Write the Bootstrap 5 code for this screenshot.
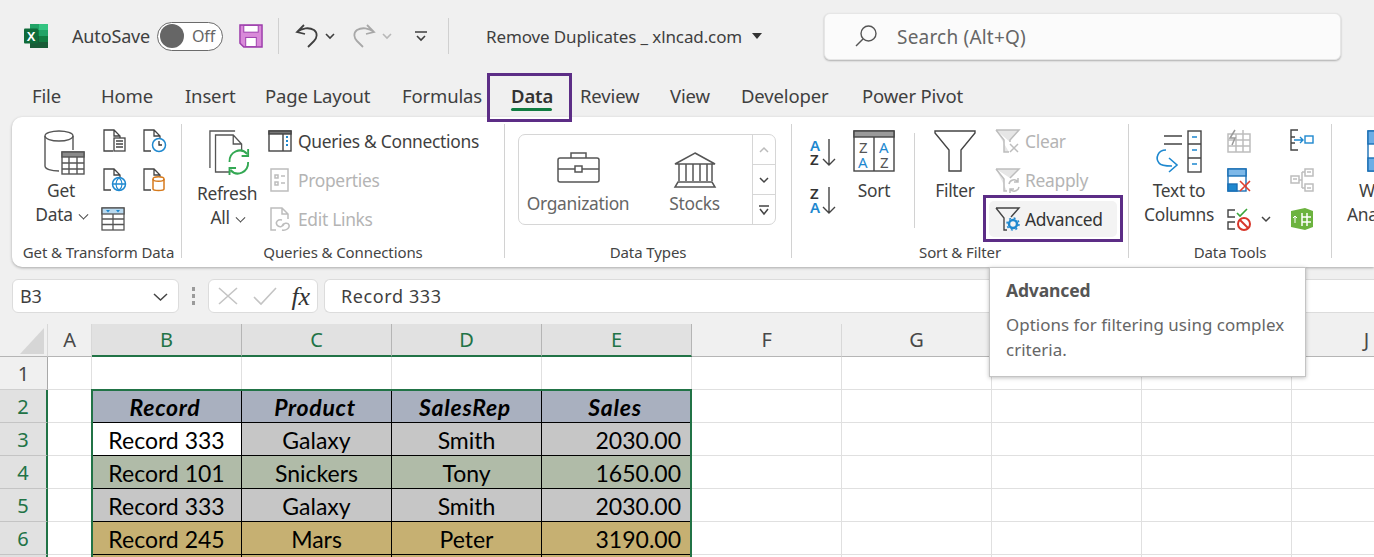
<!DOCTYPE html>
<html lang="en"><head><meta charset="utf-8"><title>Remove Duplicates</title>
<link href="https://cdn.jsdelivr.net/npm/bootstrap@5.3.0/dist/css/bootstrap.min.css" rel="stylesheet">
<style>
html,body{height:557px;overflow:hidden}
body{background:#f0f0f0;font-family:"Noto Sans",sans-serif;color:#3f3f3f;font-size:18px;letter-spacing:-.15px;position:relative;width:1374px}
svg{display:block;flex:none;overflow:visible}
.tbar{height:72px;padding-left:24px}
.asv{margin-left:24px;width:76px;white-space:nowrap}
.tgl{width:66px;height:29px;border:1px solid #6b6b6b;border-radius:15px;background:#fff;margin-left:9px;padding-left:2px;font-size:16px;color:#666;gap:8px}
.tgl span{width:24px;height:24px;border-radius:50%;background:#666}
.vsep{width:1px;height:36px;background:#d0d0d0}
.ttl{margin-left:37px;width:255px;white-space:nowrap;font-size:17px;letter-spacing:-.12px;padding-top:2px}
.srch{margin-left:62px;width:517px;height:47px;background:#fbfbfb;border-radius:6px;box-shadow:0 1px 2px rgba(0,0,0,.28);border:1px solid #e6e6e6;padding-left:30px;color:#666;gap:20px;font-size:19px;letter-spacing:.2px}
.srch span{padding-top:2px}
.m-save{margin-left:16px}.m-sep1{margin-left:15px}.m-undo{margin-left:16px}.m-6{margin-left:6px}.m-redo{margin-left:17px}.m-cust{margin-left:23px}.m-sep2{margin-left:21px}.m-caret{margin-left:11px}
.tabs{height:45px;padding-left:32px;padding-top:3px;white-space:nowrap;font-size:18.5px}
.t69{width:69px}.t84{width:84px}.t80{width:80px}.t137{width:137px}.t88{width:88px}.t90{width:90px}.t71{width:71px}.t121{width:121px}
.tabon{position:relative;z-index:3;height:43px;width:79px;margin-right:11px;padding:0 0 3px 21px;outline:3px solid #5c2d86;font-weight:600;color:#333;top:1px}
.tabon::after{content:"";position:absolute;left:21px;right:17px;bottom:8px;height:3px;border-radius:2px;background:#107c41}
.ribbon{height:150px;margin-left:12px;background:#fff;border-radius:10px 0 0 10px;box-shadow:0 1px 3px rgba(0,0,0,.3);padding:7px 0 9px;position:relative;font-size:17.4px;letter-spacing:-.3px}
.grp{height:134px;flex:none;border-right:1px solid #d2d2d2;display:flex;flex-direction:column;position:relative}
.grpb{flex:1;min-height:0;display:flex}
.grpl{font-size:15px;line-height:20px;text-align:center;letter-spacing:-.1px;white-space:nowrap;height:16px;color:#444}
.pl4{padding-left:4px}
.g1{width:170px}.g2{width:323px}.g3{width:287px}.g4{width:337px}.g5{width:203px}.g6{width:120px;border:0}
.bigb{text-align:center;padding-top:6px;line-height:24px;flex:none;white-space:nowrap}
.bigb svg{margin:0 auto 6px}
.bigb .i-get{margin:0 0 3px 12px}.bigb .i-ref{margin:0 0 6px 16px}.bigb .i-ttc{margin:0 0 6px 14px}.bigb .i-wi{margin:0 0 6px 20px}
.b-get{width:58px;margin-left:20px}.b-ref{width:68px;margin-left:11px}.b-sort{width:42px;margin-left:17px}.b-fil{width:42px;margin-left:19px}.b-ttc{width:74px;margin-left:13px}.b-wi{width:60px;margin-left:15px;text-align:left}
.wtxt{margin-left:12px}
.chev{display:inline-block;width:7px;height:7px;border:solid #444;border-width:0 1.6px 1.6px 0;transform:rotate(45deg) translate(-2px,-2px);margin-left:7px}
.rowi{height:36px;flex:none;display:flex;align-items:center;gap:6px;white-space:nowrap}
.gp5{gap:5px}
.lst{display:flex;flex-direction:column;gap:3px;margin-top:-1px}
.l-q{margin-left:7px}.l-f{margin-left:19px}
.off{color:#b4b4b4}
.mini{display:grid;gap:15px 16px;padding-top:5px;align-content:start}
.mn1{grid-template-columns:24px 24px;margin-left:13px}
.mn5{grid-template-columns:24px 22px 24px;margin-left:11px;column-gap:0}
.i-tb{margin-left:-2px}.i-r{margin-left:17px}
.gal{width:258px;height:91px;border:1px solid #d6d6d6;border-radius:7px;margin:10px 0 0 13px;color:#666;display:flex}
.galc{flex:1;display:flex}
.galc>div{padding-top:17px;text-align:center;width:115px;line-height:24px}
.galc>.gw{width:118px}
.galc svg{margin:0 auto 8px}
.galc .i-st{margin-bottom:3px}
.gals{width:23px;border-left:1px solid #d6d6d6;display:flex;flex-direction:column}
.gals>div{flex:1;border-bottom:1px solid #d6d6d6;display:flex;align-items:center;justify-content:center}
.gals>div:last-child{border:0}
.azc{margin:14px 0 0 18px;gap:18px;width:26px}
.sep2{width:1px;height:95px;background:#d2d2d2;margin:9px 0 0 19px}
.adv{background:#f3f3f3;border-radius:5px;padding-left:6px;margin-left:-6px;width:128px;color:#333;position:relative}
.adv::before{content:"";position:absolute;left:-6px;right:-6px;top:-6px;bottom:-5px;border:3px solid #5c2d86}
.fbar{margin-top:12px;height:34px;padding-left:12px}
.fbox{background:#fff;border:1px solid #dcdcdc;border-radius:6px;height:34px}
.nbox{width:167px;padding:1px 10px 0 7px}
.dots{width:29px;gap:3px}
.dots i{width:3px;height:4px;background:#9a9a9a}
.fx{width:110px;padding:0 7px 0 9px;font-family:"Liberation Serif",serif;font-style:italic;font-size:26px;color:#333}
.fin{flex:1;margin-left:6px;border-radius:6px 0 0 6px;border-right:0;padding-left:16px;letter-spacing:.6px;padding-top:1px}
.sheet{margin-top:11px;display:grid;grid-template-columns:48px 44px repeat(9,150px);grid-auto-rows:33px;position:relative;background:#fff}
.sheet>div{display:flex;align-items:center;justify-content:center;border-right:1px solid #e0e0e0;border-bottom:1px solid #e0e0e0}
.sheet>.hc{background:#f0f0f0;font-size:20px;color:#484848;border-right-color:#d8d8d8;border-bottom-color:#b5b5b5}
.sheet>.hs{background:#e1e1e1;color:#217346;border-right-color:#b5b5b5;border-bottom:2px solid #217346}
.sheet>.rh{background:#f0f0f0;font-size:20px;color:#484848;border-right-color:#a8a8a8;border-bottom-color:#cfcfcf;padding-top:2px}
.sheet>.rs{background:#e1e1e1;color:#217346;border-right:2px solid #217346;border-bottom-color:#c4c4c4}
.sheet>.xl{font-family:Lato,"Liberation Sans",sans-serif;font-size:23px;letter-spacing:0;color:#000;border-right:1.5px solid #000;border-bottom:1.5px solid #000;padding-top:2px}
.sheet>.hd{background:#a9b0bf;font-weight:700;font-style:italic;letter-spacing:.7px;padding-right:3px}
.sheet>.sv{background:#c6c6c6}.sheet>.gn{background:#b0bba8}.sheet>.tn{background:#c6b072}
.sheet>.num{justify-content:flex-end;padding-right:10px}
.sheet>.wh{background:#fff}
.sheet>.sel{position:absolute;grid-area:3/3/10/7;inset:-1px 0 0 -1px;background:transparent;border:2px solid #217346;pointer-events:none;z-index:2}
.tipb{position:absolute;left:989px;top:267px;width:317px;height:110px;background:#fff;border:1px solid #c4c4c4;box-shadow:0 1px 4px rgba(0,0,0,.25);padding:10px 16px;z-index:5;color:#666;font-size:16.9px;line-height:25px;letter-spacing:.05px}
.tipb h6{font-size:17.5px;font-weight:700;color:#555;line-height:24px;margin:0 0 10px;letter-spacing:-.15px}
</style></head><body>

<div class="tbar d-flex align-items-center">
<svg width="24" height="24" viewBox="0 0 24 24"><rect x="6" y="0" width="9" height="6" fill="#21a366"/><rect x="15" y="0" width="9" height="6" fill="#33c481"/><rect x="6" y="6" width="9" height="6" fill="#107c41"/><rect x="15" y="6" width="9" height="6" fill="#21a366"/><rect x="6" y="12" width="9" height="6" fill="#185c37"/><rect x="15" y="12" width="9" height="6" fill="#107c41"/><rect x="6" y="18" width="18" height="6" fill="#185c37"/><rect x="0" y="4.500" width="14" height="15" rx="1" fill="#0f6b3a"/><text x="7" y="16.500" text-anchor="middle" font-family="Liberation Sans" font-weight="700" font-size="13" fill="#fff">X</text></svg>
<span class="asv">AutoSave</span>
<div class="tgl d-flex align-items-center"><span></span>Off</div>
<svg class="m-save" width="24" height="24" viewBox="0 0 25 25"><path d="M1 1H24V24H5L1 20Z" fill="#d98ad9" stroke="#9c3cab" stroke-width="1.500"/><rect x="5" y="1.500" width="15" height="7" fill="#fff" stroke="#9c3cab"/><rect x="7" y="14" width="11" height="9.500" fill="#fff" stroke="#9c3cab"/></svg>
<div class="vsep m-sep1"></div>
<svg class="m-undo" width="24" height="24" viewBox="0 0 24 24" fill="none" stroke="#3f3f3f" stroke-width="1.800"><path d="M9 1 2 8 10 10M2 8C7 4 14 3 19 6c4 3 3 8 0 11l-6 6"/></svg>
<svg class="m-6" width="10" height="6" viewBox="0 0 10 6" fill="none" stroke="#3f3f3f" stroke-width="1.600"><path d="M1 1l4 4 4-4"/></svg>
<svg class="m-redo" width="24" height="24" viewBox="0 0 24 24" fill="none" stroke="#a8a8a8" stroke-width="1.800"><path d="M15 1l7 7-8 2M22 8C17 4 10 3 5 6c-4 3-3 8 0 11l6 6"/></svg>
<svg class="m-6" width="10" height="6" viewBox="0 0 10 6" fill="none" stroke="#b8b8b8" stroke-width="1.600"><path d="M1 1l4 4 4-4"/></svg>
<svg class="m-cust" width="12" height="10" viewBox="0 0 12 10" fill="none" stroke="#3f3f3f" stroke-width="1.600"><path d="M0 1h12M2 5l4 4 4-4"/></svg>
<div class="vsep m-sep2"></div>
<span class="ttl">Remove Duplicates _ xlncad.com</span>
<svg class="m-caret" width="10" height="6" viewBox="0 0 10 6"><path d="M0 0h10L5 6z" fill="#333"/></svg>
<div class="srch d-flex align-items-center"><svg width="22" height="22" viewBox="0 0 22 22" fill="none" stroke="#555" stroke-width="1.400"><circle cx="13.500" cy="8.500" r="7.500"/><path d="M8 14 1 21"/></svg><span>Search (Alt+Q)</span></div>
</div>

<div class="tabs d-flex align-items-center">
<span class="t69">File</span><span class="t84">Home</span><span class="t80">Insert</span><span class="t137">Page Layout</span><span class="t88">Formulas</span>
<div class="tabon d-flex align-items-center">Data</div>
<span class="t90">Review</span><span class="t71">View</span><span class="t121">Developer</span><span>Power Pivot</span>
</div>

<div class="ribbon d-flex">
<!-- Get & Transform -->
<div class="grp g1"><div class="grpb">
<div class="bigb b-get"><svg class="i-get" width="42" height="45" viewBox="0 0 42 45" fill="none" stroke="#555" stroke-width="1.400"><path d="M1 6V36c0 3 6 5 14 5M29 6V20"/><ellipse cx="15" cy="6" rx="14" ry="5"/><rect x="18" y="22" width="22" height="22" fill="#fff"/><rect x="18" y="22" width="22" height="5" fill="#8a8a8a"/><path d="M25 27V44M33 27V44M18 33H40M18 39H40"/></svg>Get<br>Data<i class="chev"></i></div>
<div class="mini mn1">
<svg width="24" height="24" viewBox="0 0 24 24" fill="none" stroke="#444" stroke-width="1.300"><path d="M10 22H1V1H11L17 7V9M11 1V7H17"/><rect x="11" y="9" width="11" height="13" fill="#fff"/><path d="M13 12h7M13 15h7M13 18h7"/></svg>
<svg width="24" height="24" viewBox="0 0 24 24" fill="none" stroke="#444" stroke-width="1.300"><path d="M8 22H1V1H11L17 7V9M11 1V7H17"/><circle cx="16" cy="16" r="6.500" fill="#fff" stroke="#1e88cf" stroke-width="1.500"/><path d="M16 12v4h3" stroke="#333"/></svg>
<svg width="24" height="24" viewBox="0 0 24 24" fill="none" stroke="#444" stroke-width="1.300"><path d="M8 22H1V1H11L17 7V9M11 1V7H17"/><circle cx="16" cy="16" r="6.500" fill="#fff" stroke="#1e88cf" stroke-width="1.500"/><path d="M9.500 16h13M16 9.500c-4 4-4 9 0 13M16 9.500c4 4 4 9 0 13" stroke="#1e88cf"/></svg>
<svg width="24" height="24" viewBox="0 0 24 24" fill="none" stroke="#444" stroke-width="1.300"><path d="M8 22H1V1H11L17 7V9M11 1V7H17"/><path d="M10 11c0-3 11-3 11 0V21c0 2-11 2-11 0Z" fill="#fff" stroke="#d67a1c" stroke-width="1.500"/><path d="M10 11c0 3 11 3 11 0" stroke="#d67a1c" stroke-width="1.500"/></svg>
<svg class="i-tb" width="24" height="24" viewBox="0 0 24 24" fill="none" stroke="#555" stroke-width="1.300"><rect x="1" y="1" width="22" height="22"/><rect x="1" y="1" width="22" height="6" fill="#b9d9ef"/><path d="M5 3h4L7 5.500zM15 3h4l-2 2.500z" fill="#1e88cf" stroke="none"/><path d="M1 12H23M1 17.500H23M12 7V23"/></svg>
</div></div>
<div class="grpl pl4">Get &amp; Transform Data</div></div>

<!-- Queries -->
<div class="grp g2"><div class="grpb">
<div class="bigb b-ref"><svg class="i-ref" width="41" height="45" viewBox="0 0 44 45" preserveAspectRatio="none" fill="none" stroke="#555" stroke-width="1.400"><path d="M5 1H1V38M5 1H28"/><path d="M23 42H7V5H26L35 14V20M26 5V14H35"/><path d="M22 32a11 11 0 0 1 19-8M42 32a11 11 0 0 1-19 8" stroke="#33a853" stroke-width="2"/><path d="M42 19v7h-7M22 45v-7h7" stroke="#33a853" stroke-width="2"/></svg>Refresh<br>All<i class="chev"></i></div>
<div class="lst l-q">
<div class="rowi"><svg width="24" height="22" viewBox="0 0 24 22" fill="none" stroke="#444" stroke-width="1.400"><rect x="1" y="1" width="22" height="20"/><rect x="1" y="1" width="22" height="3" fill="#777"/><path d="M15 4V21"/><path d="M18 7h2M18 11h2M18 15h2" stroke="#1e88cf" stroke-width="2"/></svg>Queries &amp; Connections</div>
<div class="rowi off"><svg width="24" height="24" viewBox="0 0 24 24" fill="none" stroke="#bdbdbd" stroke-width="1.500"><rect x="3" y="1" width="17" height="22"/><path d="M7 7h3v3H7zM7 14h3v3H7zM13 8h4M13 15h4"/></svg>Properties</div>
<div class="rowi off"><svg width="24" height="24" viewBox="0 0 24 24" fill="none" stroke="#bdbdbd" stroke-width="1.500"><path d="M8 23H3V1H14L20 7V12M14 1V7H20"/><path d="M14 13c-4-1-7 2-5 5s6 2 7-1M14 23c4 1 8-2 7-5s-6-2-7 1"/></svg>Edit Links</div>
</div></div>
<div class="grpl">Queries &amp; Connections</div></div>

<!-- Data Types -->
<div class="grp g3"><div class="grpb">
<div class="gal"><div class="galc">
<div class="gw"><svg width="43" height="31" viewBox="0 0 43 31" fill="none" stroke="#555" stroke-width="1.500"><path d="M14 6V1H29V6"/><rect x="1" y="6" width="41" height="24" rx="2"/><path d="M1 17H18M25 17H42"/><rect x="18" y="14" width="7" height="6"/></svg>Organization</div>
<div><svg class="i-st" width="42" height="36" viewBox="0 0 42 36" fill="none" stroke="#555" stroke-width="1.500"><path d="M21 1 41 12H1Z"/><path d="M5 12V29M12 12V29M19 12V29M26 12V29M33 12V29M38 12V29M4 30H38M1 35H41L38 30H4Z"/></svg>Stocks</div>
</div><div class="gals">
<div><svg width="10" height="6" viewBox="0 0 10 6" fill="none" stroke="#bbb" stroke-width="1.500"><path d="M1 5l4-4 4 4"/></svg></div>
<div><svg width="10" height="6" viewBox="0 0 10 6" fill="none" stroke="#444" stroke-width="1.500"><path d="M1 1l4 4 4-4"/></svg></div>
<div><svg width="10" height="10" viewBox="0 0 10 10" fill="none" stroke="#444" stroke-width="1.500"><path d="M0 1h10M1 4l4 5 4-5"/></svg></div>
</div></div></div>
<div class="grpl">Data Types</div></div>

<!-- Sort & Filter -->
<div class="grp g4"><div class="grpb">
<div class="d-flex flex-column azc">
<svg width="26" height="30" viewBox="0 0 26 30" fill="none" font-family="Noto Sans" font-size="15" font-weight="600"><text x="0" y="13" fill="#1e88cf">A</text><text x="0" y="27" fill="#333">Z</text><path d="M19 1V27M13 21l6 6 6-6" stroke="#444" stroke-width="1.400"/></svg>
<svg width="26" height="30" viewBox="0 0 26 30" fill="none" font-family="Noto Sans" font-size="15" font-weight="600"><text x="0" y="13" fill="#333">Z</text><text x="0" y="27" fill="#1e88cf">A</text><path d="M19 1V27M13 21l6 6 6-6" stroke="#444" stroke-width="1.400"/></svg>
</div>
<div class="bigb b-sort"><svg width="42" height="42" viewBox="0 0 42 42" fill="none" stroke="#444" stroke-width="1.400" font-family="Noto Sans" font-size="15"><rect x="1" y="1" width="40" height="40"/><rect x="1" y="1" width="40" height="6" fill="#9a9a9a"/><path d="M21 7V41"/><text x="6" y="23" fill="#555" stroke="none">Z</text><text x="5" y="38" fill="#1e88cf" stroke="none">A</text><text x="26" y="23" fill="#1e88cf" stroke="none">A</text><text x="27" y="38" fill="#555" stroke="none">Z</text></svg>Sort</div>
<div class="sep2"></div>
<div class="bigb b-fil"><svg width="42" height="42" viewBox="0 0 42 42" fill="none" stroke="#444" stroke-width="1.400"><path d="M1 1H41V3L27 20V41H15V20L1 3Z"/></svg>Filter</div>
<div class="lst l-f">
<div class="rowi off gp5"><svg width="25" height="24" viewBox="0 0 25 24" fill="none" stroke="#bdbdbd" stroke-width="1.500"><path d="M1 1H24L15 11V13M1 1 9 11V23H14" fill="#e6e6e6"/><path d="M15 15l8 8M23 15l-8 8"/></svg>Clear</div>
<div class="rowi off gp5"><svg width="25" height="24" viewBox="0 0 25 24" fill="none" stroke="#bdbdbd" stroke-width="1.500"><path d="M1 1H24L15 10M1 1 9 11V23H12" fill="#e6e6e6"/><path d="M14 16a5 5 0 0 1 9-2M24 19a5 5 0 0 1-9 2M23 10v4h-4M15 25v-4h4"/></svg>Reapply</div>
<div class="rowi adv gp5"><svg width="25" height="24" viewBox="0 0 25 24" fill="none" stroke="#444" stroke-width="1.400"><path d="M1 1H24L16 10M1 1 9 11V23H12"/><circle cx="18" cy="17" r="4" stroke="#1e88cf" stroke-width="2.500"/><circle cx="18" cy="17" r="6" stroke="#1e88cf" stroke-width="1.500" stroke-dasharray="2 2.700"/></svg>Advanced</div>
</div></div>
<div class="grpl">Sort &amp; Filter</div></div>

<!-- Data Tools -->
<div class="grp g5"><div class="grpb">
<div class="bigb b-ttc"><svg class="i-ttc" width="46" height="42" viewBox="0 0 46 42" fill="none" stroke="#444" stroke-width="1.400"><path d="M8 6H26M8 14H26"/><rect x="32" y="1" width="13" height="41"/><path d="M32 14H45M32 28H45"/><path d="M36 7h5M36 20h5M36 34h5" stroke="#1e88cf" stroke-width="1.600"/><path d="M10 20C2 20-1 28 3 33c2 3 8 3 13 3M13 28l8 7-8 7" stroke="#1e88cf" stroke-width="1.600"/></svg>Text to<br>Columns</div>
<div class="mini mn5">
<svg width="24" height="24" viewBox="0 0 24 24" fill="none" stroke="#bdbdbd" stroke-width="1.500"><rect x="1" y="5" width="22" height="18"/><path d="M1 11H23M1 17H23M9 5V23M16 1V23"/><path d="M8 1 3 9h5l-3 7" stroke="#999"/></svg>
<span></span>
<svg class="i-r" width="24" height="22" viewBox="0 0 24 22" fill="none" stroke="#444" stroke-width="1.400"><path d="M8 1H1V21H8M1 8H5M1 14H5"/><path d="M4 11H13M10 8l3 3-3 3" stroke="#1e88cf"/><rect x="15" y="7" width="8" height="7" stroke="#1e88cf"/></svg>
<svg width="24" height="24" viewBox="0 0 24 24" fill="none" stroke="#1a6fb5" stroke-width="1.400"><rect x="1" y="1" width="18" height="22"/><rect x="1" y="1" width="18" height="7" fill="#7db8e8"/><rect x="1" y="16" width="9" height="7" fill="#1e88cf"/><path d="M13 13l10 10M23 13 13 23" stroke="#e0402f" stroke-width="1.600"/></svg>
<span></span>
<svg class="i-r" width="24" height="24" viewBox="0 0 24 24" fill="none" stroke="#bdbdbd" stroke-width="1.500"><rect x="1" y="8" width="8" height="7"/><rect x="15" y="1" width="8" height="7"/><rect x="15" y="16" width="8" height="7"/><path d="M9 12h3M12 4h3M12 20h3M12 4V20M3 11h4M17 4h4M17 20h4"/></svg>
<svg width="24" height="24" viewBox="0 0 24 24" fill="none" stroke="#444" stroke-width="1.400"><path d="M8 3H1V10H8M8 15H1V22H8"/><path d="M10 6l3 3 7-7" stroke="#3aa53a" stroke-width="1.600"/><circle cx="17" cy="17" r="6" stroke="#d8362a" stroke-width="2"/><path d="M13 13l8 8" stroke="#d8362a" stroke-width="2"/></svg>
<div class="d-flex align-items-center justify-content-center ps-2"><svg width="10" height="6" viewBox="0 0 10 6" fill="none" stroke="#444" stroke-width="1.500"><path d="M1 1l4 4 4-4"/></svg></div>
<svg class="i-r" width="24" height="24" viewBox="0 0 24 24"><path d="M1 4 15 1 23 4V20L15 23 1 20Z" fill="#6cb33f"/><path d="M12 6V19M17 6V19M12 10h9M12 15h9" stroke="#fff" stroke-width="1.500"/><path d="M5 16V9l-2 2M5 9l2 2" stroke="#fff" fill="none"/></svg>
</div></div>
<div class="grpl">Data Tools</div></div>

<!-- What-if -->
<div class="grp g6"><div class="grpb">
<div class="bigb b-wi"><svg class="i-wi" width="30" height="42" viewBox="0 0 30 42" fill="none" stroke="#1a6fb5" stroke-width="1.400"><rect x="1" y="1" width="28" height="40" fill="#fff"/><rect x="1" y="1" width="28" height="13" fill="#6caee6"/><rect x="1" y="28" width="28" height="13" fill="#6caee6"/></svg><span class="wtxt">W</span><br>Ana</div>
</div></div>
</div>

<div class="fbar d-flex">
<div class="fbox nbox d-flex align-items-center justify-content-between">B3<svg width="15" height="8" viewBox="0 0 15 8" fill="none" stroke="#444" stroke-width="1.500"><path d="M1 1l6.500 6L14 1"/></svg></div>
<div class="dots d-flex flex-column align-items-center justify-content-center"><i></i><i></i><i></i></div>
<div class="fbox fx d-flex align-items-center justify-content-between"><svg width="20" height="18" viewBox="0 0 20 18" fill="none" stroke="#c4c4c4" stroke-width="1.600"><path d="M1 1l18 16M19 1 1 17"/></svg><svg width="24" height="18" viewBox="0 0 24 18" fill="none" stroke="#c4c4c4" stroke-width="1.600"><path d="M1 10l7 7L23 1"/></svg><span>fx</span></div>
<div class="fbox fin d-flex align-items-center">Record 333</div>
</div>

<div class="sheet">
<div class="hc"><svg width="47" height="33" viewBox="0 0 47 33"><path d="M44 4V30H20Z" fill="#d6d6d6"/></svg></div><div class="hc">A</div><div class="hc hs">B</div><div class="hc hs">C</div><div class="hc hs">D</div><div class="hc hs">E</div><div class="hc">F</div><div class="hc">G</div><div class="hc"></div><div class="hc"></div><div class="hc">J</div>

<div class="rh">1</div><div></div><div></div><div></div><div></div><div></div><div></div><div></div><div></div><div></div><div></div>

<div class="rh rs">2</div><div></div><div class="xl hd">Record</div><div class="xl hd">Product</div><div class="xl hd">SalesRep</div><div class="xl hd">Sales</div><div></div><div></div><div></div><div></div><div></div>

<div class="rh rs">3</div><div></div><div class="xl wh">Record 333</div><div class="xl sv">Galaxy</div><div class="xl sv">Smith</div><div class="xl sv num">2030.00</div><div></div><div></div><div></div><div></div><div></div>

<div class="rh rs">4</div><div></div><div class="xl gn">Record 101</div><div class="xl gn">Snickers</div><div class="xl gn">Tony</div><div class="xl gn num">1650.00</div><div></div><div></div><div></div><div></div><div></div>

<div class="rh rs">5</div><div></div><div class="xl sv">Record 333</div><div class="xl sv">Galaxy</div><div class="xl sv">Smith</div><div class="xl sv num">2030.00</div><div></div><div></div><div></div><div></div><div></div>

<div class="rh rs">6</div><div></div><div class="xl tn">Record 245</div><div class="xl tn">Mars</div><div class="xl tn">Peter</div><div class="xl tn num">3190.00</div><div></div><div></div><div></div><div></div><div></div>

<div class="rh rs"></div><div></div><div class="xl tn"></div><div class="xl tn"></div><div class="xl tn"></div><div class="xl tn"></div><div></div><div></div><div></div><div></div><div></div>
<div class="sel"></div>
</div>

<div class="tipb"><h6>Advanced</h6>Options for filtering using complex criteria.</div>
</body></html>
